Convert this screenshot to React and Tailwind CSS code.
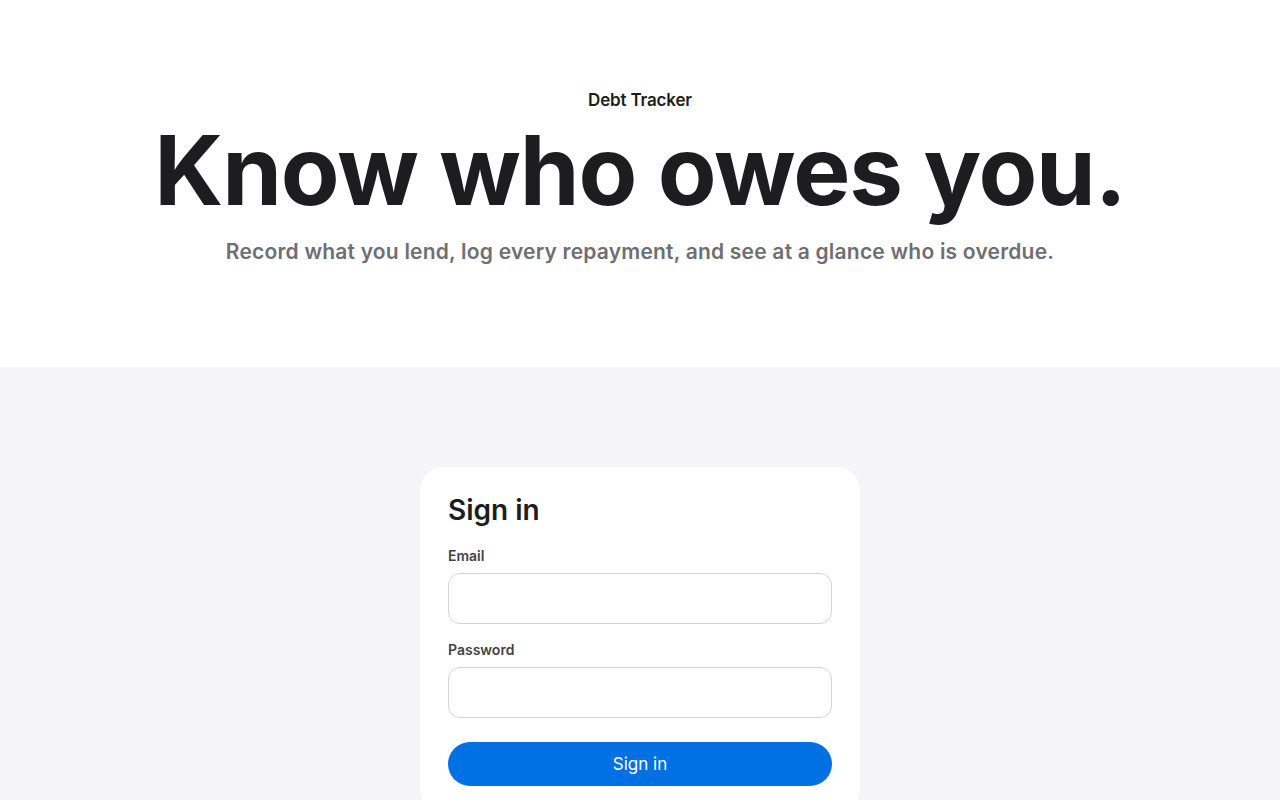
export default function App() {
  return (
    <div className="min-h-screen bg-[#f5f5f7] font-['Inter','Liberation_Sans',sans-serif] text-[#1d1d1f]">
      {/* Hero */}
      <section className="bg-white h-[367px] flex flex-col items-center pt-[89px] text-center">
        <p className="text-[17px] font-semibold leading-[22px] tracking-[-0.01em]">Debt Tracker</p>
        <h1 className="mt-[7px] text-[96px] leading-[104px] font-bold tracking-[-0.012em]">
          Know who owes you.
        </h1>
        <p className="mt-[16px] text-[21px] leading-[28px] font-semibold tracking-[0.01em] text-[#6e6e73]">
          Record what you lend, log every repayment, and see at a glance who is overdue.
        </p>
      </section>

      {/* Sign in */}
      <section className="flex justify-center pt-[100px] pb-16">
        <form
          onSubmit={(e) => e.preventDefault()}
          className="w-[440px] bg-white rounded-[24px] px-7 pt-[25px] pb-7"
        >
          <h2 className="text-[28px] leading-[36px] font-semibold">Sign in</h2>

          <label className="block mt-[19px] text-[14px] leading-[18px] font-semibold text-[#424245]">
            Email
          </label>
          <input
            type="email"
            className="mt-2 block w-full h-[51px] rounded-[12px] border border-[#d2d2d7] bg-white px-4 text-[17px] outline-none"
          />

          <label className="block mt-[17px] text-[14px] leading-[18px] font-semibold text-[#424245]">
            Password
          </label>
          <input
            type="password"
            className="mt-2 block w-full h-[51px] rounded-[12px] border border-[#d2d2d7] bg-white px-4 text-[17px] outline-none"
          />

          <button
            type="submit"
            className="mt-6 w-full h-[44px] rounded-full bg-[#0071e3] text-white text-[17px] leading-[22px]"
          >
            Sign in
          </button>
        </form>
      </section>
    </div>
  );
}
